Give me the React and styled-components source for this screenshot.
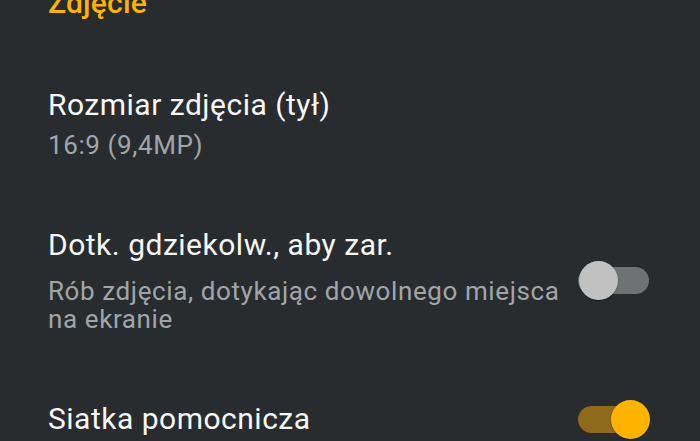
import React from 'react'
import styled, { createGlobalStyle } from 'styled-components'

const GlobalStyle = createGlobalStyle`
  html, body {
    margin: 0;
    padding: 0;
    background: #282c2f;
    overflow: hidden;
  }
  body {
    font-family: Roboto, "Noto Sans", "Liberation Sans", sans-serif;
    -webkit-font-smoothing: antialiased;
  }
`

const Screen = styled.div`
  width: 700px;
  height: 441px;
  overflow: hidden;
  background: #282c2f;
  padding: 0 51px 0 48px;
  box-sizing: border-box;
`

const SectionTitle = styled.div`
  margin-top: -13px;
  font-size: 30px;
  line-height: 32px;
  letter-spacing: 0.2px;
  font-weight: 500;
  color: #fbb400;
`

const List = styled.div`
  display: flex;
  flex-direction: column;
  gap: 68px;
  margin-top: 68px;
`

const Row = styled.div`
  display: flex;
  align-items: center;
  gap: 14px;
`

const Texts = styled.div`
  flex: 1;
  min-width: 0;
  display: flex;
  flex-direction: column;
  gap: ${p => p.$gap || 8}px;
`

const Title = styled.div`
  font-size: 30px;
  line-height: 36px;
  letter-spacing: 0.5px;
  color: #f7f7f7;
`

const Summary = styled.div`
  font-size: 26px;
  line-height: 28px;
  letter-spacing: 0.6px;
  color: #a2a5a7;
`

const Track = styled.div`
  position: relative;
  flex: none;
  width: 71px;
  height: 27px;
  border-radius: 14px;
  background: ${p => (p.$on ? '#8d6a1c' : '#6e7273')};
`

const Thumb = styled.div`
  position: absolute;
  top: 50%;
  width: 39px;
  height: 39px;
  margin-top: -19.5px;
  border-radius: 50%;
  background: ${p => (p.$on ? '#fdb300' : '#c1c1c1')};
  ${p => (p.$on ? 'right: -1px;' : 'left: 1px;')}
  box-shadow: 0 1px 2px rgba(0, 0, 0, 0.25);
`

const Switch = ({ on }) => (
  <Track $on={on}>
    <Thumb $on={on} />
  </Track>
)

export default function App() {
  return (
    <>
      <GlobalStyle />
      <Screen>
        <SectionTitle>Zdjęcie</SectionTitle>
        <List>
          <Row>
            <Texts>
              <Title>Rozmiar zdjęcia (tył)</Title>
              <Summary>16:9 (9,4MP)</Summary>
            </Texts>
          </Row>
          <Row>
            <Texts $gap={14}>
              <Title>Dotk. gdziekolw., aby zar.</Title>
              <Summary>Rób zdjęcia, dotykając dowolnego miejsca na ekranie</Summary>
            </Texts>
            <Switch />
          </Row>
          <Row>
            <Texts>
              <Title>Siatka pomocnicza</Title>
            </Texts>
            <Switch on />
          </Row>
        </List>
      </Screen>
    </>
  )
}
